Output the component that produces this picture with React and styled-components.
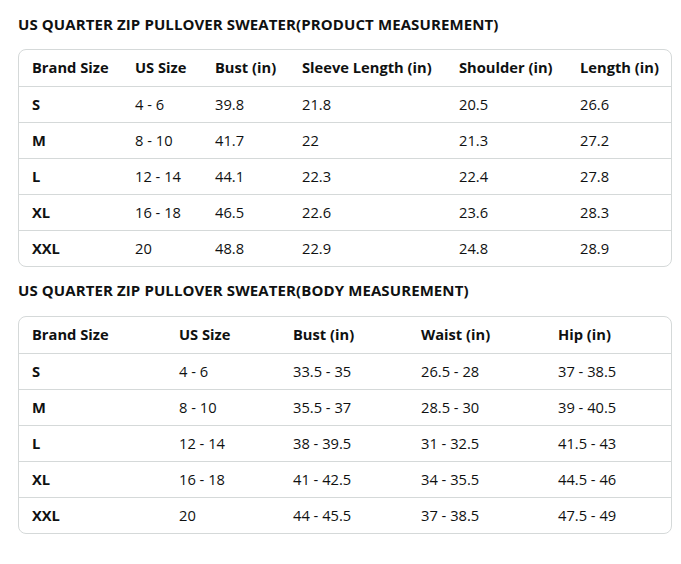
import React from "react";
import styled, { createGlobalStyle } from "styled-components";

const Global = createGlobalStyle`
  html, body { margin: 0; padding: 0; background: #fff; }
  body { font-family: "Open Sans", "Noto Sans", Arial, sans-serif; color: #0f1111; }
`;

const Page = styled.div`
  width: 654px;
  padding: 14px 0 0 18px;
`;

const Title = styled.h2`
  margin: ${(p) => (p.$first ? "0 0 15px" : "13px 0 16px")} 0;
  font-size: 15px;
  line-height: 20px;
  font-weight: 700;
  letter-spacing: 0.1px;
`;

const Card = styled.div`
  border: 1px solid #d5d9d9;
  border-radius: 8px;
  overflow: hidden;
`;

const Table = styled.table`
  width: 100%;
  border-collapse: collapse;
  table-layout: fixed;
`;

const Col = styled.col`
  width: ${(p) => p.$w}px;
`;

const Row = styled.tr`
  height: 36px;
  & + & { border-top: 1px solid #d5d9d9; }
`;

const Cell = styled.td`
  padding: 0 0 1px 13px;
  font-size: 14.7px;
  line-height: 20px;
  font-weight: ${(p) => (p.$bold ? 700 : 400)};
  white-space: nowrap;
  vertical-align: middle;
`;

const tables = [
  {
    title: "US QUARTER ZIP PULLOVER SWEATER(PRODUCT MEASUREMENT)",
    cols: [103, 80, 87, 157, 121, 106],
    head: ["Brand Size", "US Size", "Bust (in)", "Sleeve Length (in)", "Shoulder (in)", "Length (in)"],
    rows: [
      ["S", "4 - 6", "39.8", "21.8", "20.5", "26.6"],
      ["M", "8 - 10", "41.7", "22", "21.3", "27.2"],
      ["L", "12 - 14", "44.1", "22.3", "22.4", "27.8"],
      ["XL", "16 - 18", "46.5", "22.6", "23.6", "28.3"],
      ["XXL", "20", "48.8", "22.9", "24.8", "28.9"],
    ],
  },
  {
    title: "US QUARTER ZIP PULLOVER SWEATER(BODY MEASUREMENT)",
    cols: [147, 114, 128, 137, 128],
    head: ["Brand Size", "US Size", "Bust (in)", "Waist (in)", "Hip (in)"],
    rows: [
      ["S", "4 - 6", "33.5 - 35", "26.5 - 28", "37 - 38.5"],
      ["M", "8 - 10", "35.5 - 37", "28.5 - 30", "39 - 40.5"],
      ["L", "12 - 14", "38 - 39.5", "31 - 32.5", "41.5 - 43"],
      ["XL", "16 - 18", "41 - 42.5", "34 - 35.5", "44.5 - 46"],
      ["XXL", "20", "44 - 45.5", "37 - 38.5", "47.5 - 49"],
    ],
  },
];

export default function App() {
  return (
    <>
      <Global />
      <Page>
        {tables.map((t, ti) => (
          <React.Fragment key={ti}>
            <Title $first={ti === 0}>{t.title}</Title>
            <Card>
              <Table>
                <colgroup>
                  {t.cols.map((w, i) => (
                    <Col key={i} $w={w} />
                  ))}
                </colgroup>
                <tbody>
                  <Row>
                    {t.head.map((h, i) => (
                      <Cell key={i} $bold>{h}</Cell>
                    ))}
                  </Row>
                  {t.rows.map((r, ri) => (
                    <Row key={ri}>
                      {r.map((c, ci) => (
                        <Cell key={ci} $bold={ci === 0}>{c}</Cell>
                      ))}
                    </Row>
                  ))}
                </tbody>
              </Table>
            </Card>
          </React.Fragment>
        ))}
      </Page>
    </>
  );
}
